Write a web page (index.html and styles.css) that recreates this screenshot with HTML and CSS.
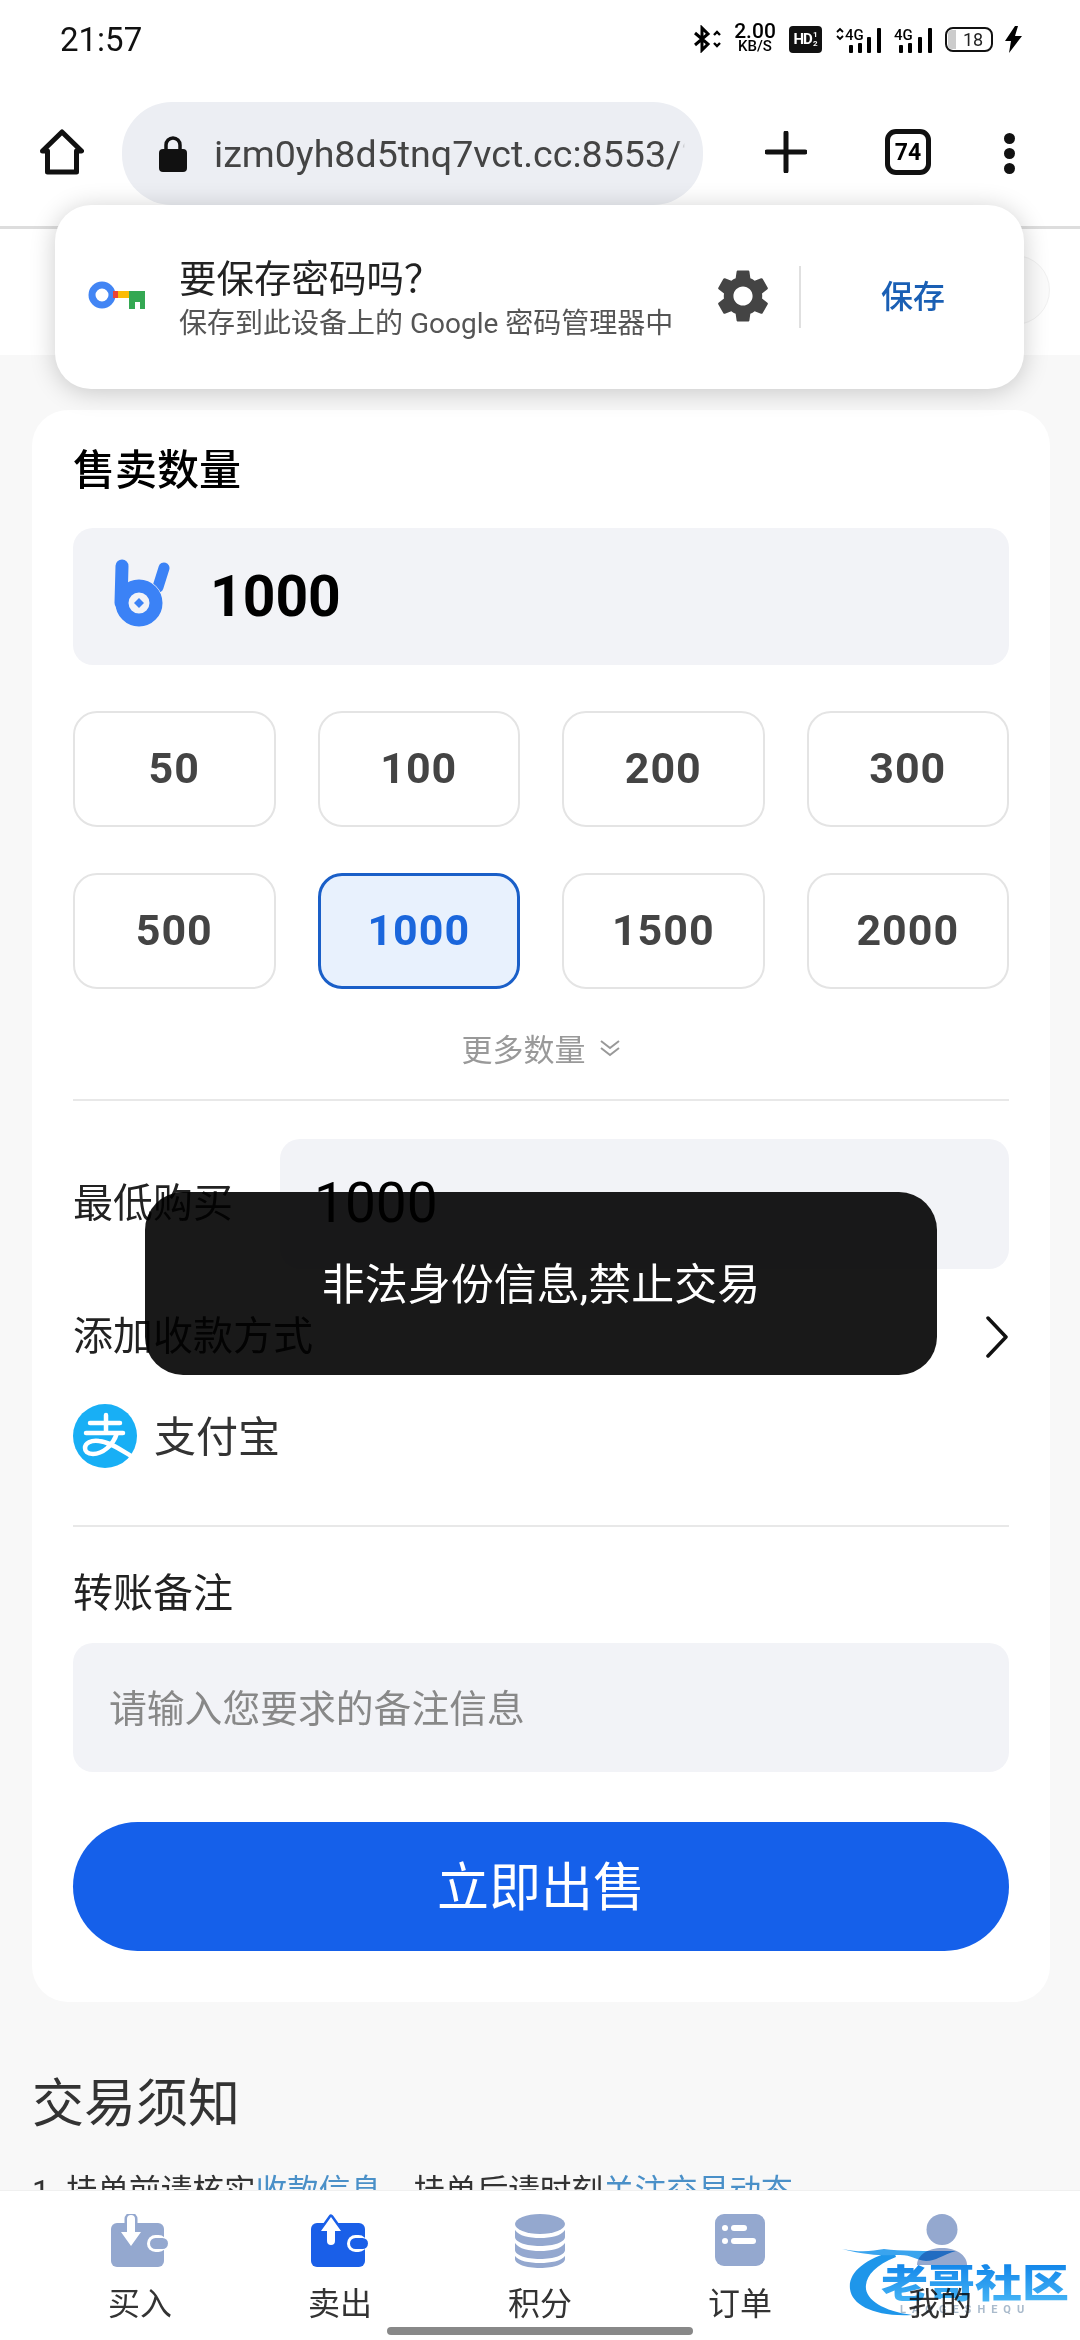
FILE: index.html
```html
<!DOCTYPE html>
<html lang="zh-CN">
<head>
    <meta charset="UTF-8">
    <meta name="viewport" content="width=device-width, initial-scale=1.0">
    <title>出售</title>
    <link rel="stylesheet" href="styles.css">
</head>
<body>

<!-- Status bar -->
<div class="status-bar">
    <span class="status-time">21:57</span>
    <div class="status-icons">
        <svg width="28" height="28" viewBox="0 0 28 28"><path d="M2 8l13 11-6 6V3l6 6L2 20" fill="none" stroke="#000" stroke-width="3"/><path d="M21 10l3-3 3 3M21 18l3 3 3-3" fill="none" stroke="#000" stroke-width="2.4"/></svg>
        <div class="net-speed"><b>2.00</b><span>KB/S</span></div>
        <div class="hd-badge"><b>HD</b><i>1<br>2</i></div>
        <svg width="47" height="27" viewBox="0 0 47 27"><path d="M3 6l3-3 3 3M3 10l3 3 3-3" fill="none" stroke="#000" stroke-width="1.8"/><text x="11" y="14" class="sig-text">4G</text><rect x="15" y="19" width="4" height="8" rx="1"/><rect x="24" y="17" width="4" height="10" rx="1"/><rect x="33" y="11" width="4" height="16" rx="1"/><rect x="43" y="2" width="4" height="25" rx="1"/></svg>
        <svg width="40" height="27" viewBox="0 0 40 27"><text x="1" y="14" class="sig-text">4G</text><rect x="6" y="19" width="4" height="8" rx="1"/><rect x="15" y="17" width="4" height="10" rx="1"/><rect x="25" y="11" width="4" height="16" rx="1"/><rect x="35" y="2" width="4" height="25" rx="1"/></svg>
        <div class="battery"><span class="battery-fill"></span><span class="battery-num">18</span></div>
        <svg width="17" height="27" viewBox="0 0 17 27"><path d="M10 0L0 15h6l-2 12L17 10h-7l3-10z"/></svg>
    </div>
</div>

<!-- Browser toolbar -->
<div class="toolbar">
    <svg class="home-icon" width="44" height="46" viewBox="0 0 44 46"><path d="M2.5 22L22 3l19.500 19H36.500V43H7.500V22z" fill="none" stroke="#111" stroke-width="5" stroke-linejoin="round"/></svg>
    <div class="url-pill">
        <svg width="28" height="36" viewBox="0 0 28 36"><path d="M7 14V9a7 7 0 0 1 14 0v5" fill="none" stroke="#111" stroke-width="3.500"/><rect x="0" y="13" width="28" height="23" rx="4" fill="#111"/></svg>
        <span class="url-text">izm0yh8d5tnq7vct.cc:8553/?</span>
    </div>
    <svg class="plus-icon" width="42" height="42" viewBox="0 0 42 42"><path d="M21 2v38M2 21h38" stroke="#111" stroke-width="5" stroke-linecap="round"/></svg>
    <div class="tab-count">74</div>
    <div class="more-dots"><span></span><span></span><span></span></div>
</div>

<!-- Save password popup -->
<div class="save-popup">
    <svg class="key-icon" width="58" height="28" viewBox="0 0 58 28"><circle cx="14" cy="14" r="10" fill="none" stroke="#4285f4" stroke-width="7"/><rect x="25" y="10" width="5" height="7" fill="#ea4335"/><rect x="30" y="10" width="11" height="7" fill="#fbbc05"/><path d="M41 10h16v18h-5v-7h-5v7h-6z" fill="#34a853"/></svg>
    <div class="popup-text">
        <div class="popup-title">要保存密码吗？</div>
        <div class="popup-sub">保存到此设备上的 Google 密码管理器中</div>
    </div>
    <svg class="gear-icon" width="64" height="64" viewBox="0 0 24 24"><path fill="#444" d="M19.140 12.940c.04-.3.06-.61.06-.94 0-.32-.02-.64-.07-.94l2.030-1.580c.18-.14.23-.41.12-.61l-1.920-3.320c-.12-.22-.37-.29-.59-.22l-2.390.96c-.5-.38-1.030-.7-1.620-.94l-.36-2.540c-.04-.24-.24-.41-.48-.41h-3.840c-.24 0-.43.17-.47.41l-.36 2.540c-.59.24-1.130.57-1.620.94l-2.390-.96c-.22-.08-.47 0-.59.22L2.740 8.870c-.12.21-.08.47.12.61l2.030 1.580c-.05.3-.09.63-.09.94s.02.64.07.94l-2.030 1.580c-.18.14-.23.41-.12.61l1.920 3.320c.12.22.37.29.59.22l2.390-.96c.5.38 1.030.7 1.620.94l.36 2.540c.05.24.24.41.48.41h3.840c.24 0 .44-.17.47-.41l.36-2.540c.59-.24 1.130-.56 1.620-.94l2.390.96c.22.08.47 0 .59-.22l1.920-3.320c.12-.22.07-.47-.12-.61l-2.010-1.580zM12 15.600c-1.980 0-3.600-1.620-3.600-3.600s1.620-3.600 3.600-3.600 3.600 1.620 3.600 3.600-1.620 3.600-3.600 3.600z"/></svg>
    <div class="popup-divider"></div>
    <div class="popup-save">保存</div>
</div>

<!-- Page -->
<div class="main">
    <div class="top-strip"><div class="top-pill"></div></div>

    <div class="page">
        <div class="card">
            <div class="card-title">售卖数量</div>
            <div class="amount-input">
                <svg class="coin-logo" width="56" height="68" viewBox="0 0 56 68"><path d="M50 9L44 28" stroke="#3b82f6" stroke-width="11" stroke-linecap="round"/><circle cx="25" cy="44" r="24" fill="#f2f3f7"/><path d="M8 7L7 44" stroke="#3b82f6" stroke-width="13" stroke-linecap="round"/><circle cx="25" cy="44" r="17" fill="none" stroke="#3b82f6" stroke-width="13"/><path d="M25 39l5 5-5 5-5-5z" fill="#3b82f6"/></svg>
                <span class="amount-value">1000</span>
            </div>

            <div class="amount-grid">
                <div class="amount-btn">50</div>
                <div class="amount-btn">100</div>
                <div class="amount-btn">200</div>
                <div class="amount-btn">300</div>
                <div class="amount-btn">500</div>
                <div class="amount-btn active">1000</div>
                <div class="amount-btn">1500</div>
                <div class="amount-btn">2000</div>
            </div>

            <div class="more-row">
                <span>更多数量</span>
                <svg width="22" height="18" viewBox="0 0 22 18"><path d="M2 2l9 7 9-7M2 9l9 7 9-7" fill="none" stroke="#999" stroke-width="2"/></svg>
            </div>
            <div class="line"></div>

            <div class="min-row">
                <span class="field-label">最低购买</span>
                <div class="min-input">1000</div>
            </div>

            <div class="pay-row">
                <span class="field-label">添加收款方式</span>
                <svg width="24" height="42" viewBox="0 0 24 42"><path d="M3 2l18 19L3 40" fill="none" stroke="#111" stroke-width="3.500" stroke-linecap="round" stroke-linejoin="round"/></svg>
            </div>

            <div class="alipay-row">
                <svg width="64" height="64" viewBox="0 0 64 64"><circle cx="32" cy="32" r="32" fill="#18aff5"/><path d="M17 19h30M33 11v17M13 29h37M44 29c-4 13-15 21-24 21-6 0-8-3-8-6 0-5 6-8 14-7 11 1 22 9 32 15" fill="none" stroke="#fff" stroke-width="4.500" stroke-linecap="round"/></svg>
                <span class="alipay-name">支付宝</span>
            </div>
            <div class="line line-pay"></div>

            <div class="field-label remark-label">转账备注</div>
            <div class="remark-input">请输入您要求的备注信息</div>
            <div class="submit-btn">立即出售</div>
        </div>

        <div class="notice-title">交易须知</div>
        <div class="notice-line">1. 挂单前请核实<a>收款信息</a>，挂单后请时刻<a>关注交易动态</a></div>
    </div>
</div>

<!-- Bottom nav -->
<div class="bottom-nav">
    <div class="nav-item">
        <svg width="58" height="54" viewBox="0 0 58 54"><rect x="0" y="9" width="53" height="44" rx="6" fill="#94a8cf"/><path d="M16 18V5a4 4 0 0 1 8 0v13h6L20 32 10 18z" fill="#fff" stroke="#94a8cf" stroke-width="5" stroke-linejoin="round"/><path d="M16 18V5a4 4 0 0 1 8 0v13h6L20 32 10 18z" fill="#fff"/><rect x="36" y="21" width="20" height="17" rx="8.500" fill="#fff"/><rect x="39" y="24" width="18" height="11" rx="5.500" fill="#94a8cf"/></svg>
        <span>买入</span>
    </div>
    <div class="nav-item">
        <svg width="58" height="54" viewBox="0 0 58 54"><rect x="0" y="9" width="54" height="44" rx="6" fill="#1a5fe8"/><path d="M10 17L20 3l10 14h-6v10a4 4 0 0 1-8 0V17z" fill="#fff" stroke="#1a5fe8" stroke-width="5" stroke-linejoin="round"/><path d="M10 17L20 3l10 14h-6v10a4 4 0 0 1-8 0V17z" fill="#fff"/><rect x="36" y="21" width="20" height="17" rx="8.500" fill="#fff"/><rect x="39" y="24" width="18" height="11" rx="5.500" fill="#1a5fe8"/></svg>
        <span>卖出</span>
    </div>
    <div class="nav-item">
        <svg width="50" height="54" viewBox="0 0 50 54"><ellipse cx="25" cy="10" rx="25" ry="10" fill="#94a8cf"/><path d="M0 16c4 6 14 8 25 8s21-2 25-8v7c0 5-11 9-25 9S0 28 0 23z" fill="#94a8cf"/><path d="M0 29c4 6 14 8 25 8s21-2 25-8v7c0 5-11 9-25 9S0 41 0 36z" fill="#94a8cf"/><path d="M0 42c4 5 14 7 25 7s21-2 25-7v3c0 5-11 9-25 9S0 50 0 45z" fill="#94a8cf"/></svg>
        <span>积分</span>
    </div>
    <div class="nav-item">
        <svg width="50" height="54" viewBox="0 0 50 54"><rect width="50" height="52" rx="9" fill="#94a8cf"/><circle cx="10" cy="14" r="3" fill="#fff"/><rect x="16" y="11" width="16" height="6" rx="3" fill="#fff"/><circle cx="10" cy="27" r="3" fill="#fff"/><rect x="16" y="24" width="25" height="6" rx="3" fill="#fff"/></svg>
        <span>订单</span>
    </div>
    <div class="nav-item">
        <svg class="user-icon" width="50" height="54" viewBox="0 0 50 54"><circle cx="25" cy="15.500" r="15.500" fill="#94a8cf"/><path d="M0 51c0-10 11-17 25-17s25 7 25 17z" fill="#94a8cf"/></svg>
        <span>我的</span>
    </div>

    <!-- watermark laid over the nav -->
    <div class="watermark">
        <svg width="120" height="80" viewBox="0 0 120 80"><path d="M52 8C22 16 6 30 8 46c2 16 24 28 62 26C40 68 22 56 24 42c1-10 10-20 30-28z" fill="#1e96ea"/><path d="M0 6c20 4 30 2 42 0 16 2 40 2 72 2-14 4-20 10-30 10-10-1-14-6-26-6-10 0-28 2-58-6z" fill="#3aa4ee"/></svg>
        <div class="watermark-name">老哥社区</div>
        <div class="watermark-sub">LAOGESHEQU</div>
    </div>

    <div class="home-bar"></div>
</div>

<!-- Toast -->
<div class="toast">非法身份信息,禁止交易</div>

</body>
</html>
```

FILE: styles.css
```css
* {
    box-sizing: border-box;
}

body {
    font-family: Roboto, "Noto Sans CJK SC", sans-serif;
    background-color: #fff;
    color: #000;
    margin: 0;
    width: 1080px;
    height: 2340px;
    overflow: hidden;
    display: flex;
    flex-direction: column;
    position: relative;
}

/* Status bar */
.status-bar {
    height: 78px;
    flex: none;
    padding: 0 58px 0 60px;
    display: flex;
    align-items: center;
    justify-content: space-between;
}

.status-time {
    font-size: 33px;
    color: #111;
}

.status-icons {
    display: flex;
    align-items: center;
    gap: 12px;
}

.net-speed {
    display: flex;
    flex-direction: column;
    align-items: center;
    width: 44px;
    line-height: 15px;
}

.net-speed b {
    font-size: 21px;
    font-weight: 500;
}

.net-speed span {
    font-size: 15px;
    font-weight: 500;
}

.hd-badge {
    width: 33px;
    height: 27px;
    background-color: #111;
    border-radius: 4px;
    color: #fff;
    display: flex;
    align-items: center;
    justify-content: center;
    gap: 1px;
}

.hd-badge b {
    font-size: 15px;
    letter-spacing: -1px;
}

.hd-badge i {
    font-size: 8px;
    line-height: 9px;
    font-style: normal;
    font-weight: bold;
}

.sig-text {
    font-size: 15px;
    font-weight: 500;
    font-family: Roboto, sans-serif;
}

.battery {
    width: 48px;
    height: 25px;
    border: 2.500px solid #111;
    border-radius: 8px;
    position: relative;
    display: flex;
    align-items: center;
    justify-content: center;
    padding-left: 8px;
}

.battery-fill {
    position: absolute;
    left: 1px;
    top: 1px;
    bottom: 1px;
    width: 8px;
    background-color: #ccc;
    border-radius: 4px 0 0 4px;
}

.battery-num {
    font-size: 18px;
    color: #222;
}

/* Toolbar */
.toolbar {
    height: 151px;
    flex: none;
    padding: 0 0 0 40px;
    border-bottom: 3px solid #ddd;
    display: flex;
    align-items: center;
}

.home-icon,
.plus-icon {
    flex: none;
}

.url-pill {
    width: 581px;
    height: 103px;
    margin-left: 38px;
    margin-top: 3px;
    padding: 0 18px 0 37px;
    background-color: #eceef3;
    border-radius: 50px;
    display: flex;
    align-items: center;
    gap: 27px;
    flex: none;
}

.url-pill svg {
    flex: none;
}

.url-text {
    font-size: 37.600px;
    color: #444;
    white-space: nowrap;
    overflow: hidden;
    -webkit-mask-image: linear-gradient(to right, #000 calc(100% - 8px), transparent);
    mask-image: linear-gradient(to right, #000 calc(100% - 8px), transparent);
}

.plus-icon {
    margin-left: 62px;
}

.tab-count {
    width: 46px;
    height: 46px;
    margin-left: 78px;
    border: 5px solid #111;
    border-radius: 11px;
    font-size: 23px;
    font-weight: bold;
    display: flex;
    align-items: center;
    justify-content: center;
    flex: none;
}

.more-dots {
    margin-left: 73px;
    margin-top: 3px;
    display: flex;
    flex-direction: column;
    gap: 4px;
}

.more-dots span {
    width: 11px;
    height: 11px;
    border-radius: 50%;
    background-color: #111;
}

/* Password popup */
.save-popup {
    position: absolute;
    left: 55px;
    top: 205px;
    width: 969px;
    height: 184px;
    background-color: #fff;
    border-radius: 36px;
    box-shadow: 0 3px 26px rgba(0, 0, 0, 0.2);
    display: flex;
    align-items: center;
    padding-left: 33px;
    z-index: 5;
}

.key-icon {
    margin-bottom: 4px;
    flex: none;
}

.popup-text {
    margin-left: 33px;
    margin-top: 4px;
    width: 532px;
    flex: none;
}

.popup-title {
    font-size: 37.500px;
    line-height: 50px;
    color: #222;
}

.popup-sub {
    font-size: 28px;
    line-height: 40px;
    color: #555;
    white-space: nowrap;
}

.gear-icon {
    margin-bottom: 2px;
    flex: none;
}

.popup-divider {
    width: 2px;
    height: 62px;
    margin-left: 24px;
    background-color: #e0e0e0;
}

.popup-save {
    margin-left: 80px;
    margin-bottom: 6px;
    font-size: 32px;
    font-weight: 500;
    color: #1a5fb4;
}

/* Page */
.main {
    flex: 1;
    overflow: hidden;
    background-color: #f8f8f8;
}

.top-strip {
    height: 126px;
    background-color: #fff;
    padding: 26px 30px 0 0;
    display: flex;
    justify-content: flex-end;
}

.top-pill {
    width: 150px;
    height: 70px;
    border: 1px solid #f1f1f1;
    border-radius: 35px;
    background-color: #fbfbfb;
}

.page {
    padding: 55px 30px 0 32px;
}

.card {
    background-color: #fff;
    border-radius: 36px;
    padding: 30px 41px 51px;
}

.card-title {
    font-size: 42px;
    line-height: 60px;
    font-weight: 500;
    padding-top: 1px;
    height: 60px;
}

.amount-input {
    height: 137px;
    margin-top: 28px;
    padding-left: 41px;
    background-color: #f2f3f7;
    border-radius: 20px;
    display: flex;
    align-items: center;
    gap: 40px;
}

.coin-logo {
    margin-bottom: 8px;
}

.amount-value {
    font-size: 57px;
    font-weight: bold;
}

.amount-grid {
    margin-top: 46px;
    display: grid;
    grid-template-columns: repeat(4, 1fr);
    gap: 46px 42px;
}

.amount-btn {
    height: 116px;
    padding-bottom: 2px;
    border: 2px solid #e4e4e4;
    border-radius: 24px;
    font-size: 43px;
    letter-spacing: 1px;
    font-weight: bold;
    color: #444;
    display: flex;
    align-items: center;
    justify-content: center;
}

.amount-btn.active {
    border: 3px solid #1a5fc8;
    background-color: #e8f1fd;
    color: #1a66dc;
}

.more-row {
    margin-top: 39px;
    padding-bottom: 5px;
    height: 44px;
    font-size: 31px;
    color: #999;
    display: flex;
    align-items: center;
    justify-content: center;
    gap: 13px;
}

.line {
    height: 2px;
    margin-top: 27px;
    background-color: #e8e8e8;
}

.field-label {
    font-size: 40px;
    line-height: 56px;
    color: #222;
}

.min-row {
    margin-top: 38px;
    display: flex;
    align-items: center;
    justify-content: space-between;
}

.min-input {
    width: 729px;
    height: 130px;
    padding: 0 0 2px 34px;
    background-color: #f2f3f7;
    border-radius: 20px;
    font-size: 55px;
    display: flex;
    align-items: center;
}

.pay-row {
    margin-top: 40px;
    display: flex;
    align-items: center;
    justify-content: space-between;
}

.alipay-row {
    margin-top: 39px;
    height: 64px;
    display: flex;
    align-items: center;
    gap: 17px;
}

.alipay-name {
    font-size: 42px;
    color: #333;
    padding-bottom: 6px;
}

.line-pay {
    margin-top: 57px;
}

.remark-label {
    margin-top: 39px;
}

.remark-input {
    height: 129px;
    margin-top: 21px;
    padding: 0 0 5px 36px;
    background-color: #f2f3f7;
    border-radius: 20px;
    font-size: 37.800px;
    color: #888;
    display: flex;
    align-items: center;
}

.submit-btn {
    height: 129px;
    margin-top: 50px;
    padding-bottom: 6px;
    background-color: #1560ea;
    border-radius: 65px;
    font-size: 52px;
    color: #fff;
    display: flex;
    align-items: center;
    justify-content: center;
}

.notice-title {
    margin-top: 67px;
    font-size: 52px;
    line-height: 72px;
    color: #333;
}

.notice-line {
    margin-top: 26px;
    font-size: 31.600px;
    line-height: 50px;
    color: #333;
    white-space: nowrap;
}

.notice-line a {
    color: #4a90c8;
}

/* Bottom nav */
.bottom-nav {
    height: 150px;
    flex: none;
    padding: 23px 40px 0;
    background-color: #fff;
    border-top: 1px solid #f0f0f0;
    display: flex;
    position: relative;
}

.nav-item {
    flex: 1;
    display: flex;
    flex-direction: column;
    align-items: center;
    font-size: 32px;
    line-height: 44px;
    color: #333;
}

.nav-item svg {
    height: 54px;
    margin-bottom: 14px;
}

.nav-item .user-icon {
    margin-left: 4px;
}

.watermark {
    position: absolute;
    left: 842px;
    top: 52px;
    width: 230px;
    height: 84px;
    mix-blend-mode: multiply;
}

.watermark svg {
    position: absolute;
    left: 0;
    top: 0;
}

.watermark-name {
    position: absolute;
    left: 39px;
    top: 17px;
    font-size: 47px;
    line-height: 47px;
    font-weight: 900;
    white-space: nowrap;
    transform: scaleY(0.82);
    background: linear-gradient(#1387ea, #45b4f5);
    -webkit-background-clip: text;
    background-clip: text;
    color: transparent;
}

.watermark-sub {
    position: absolute;
    left: 58px;
    top: 60px;
    font-size: 11px;
    letter-spacing: 6px;
    font-weight: bold;
    white-space: nowrap;
    color: #aabbcc;
}

.home-bar {
    position: absolute;
    left: 387px;
    bottom: 5px;
    width: 306px;
    height: 8px;
    border-radius: 4px;
    background-color: #888;
}

/* Toast */
.toast {
    position: absolute;
    left: 145px;
    top: 1192px;
    width: 792px;
    height: 183px;
    padding-bottom: 6px;
    background-color: rgba(0, 0, 0, 0.9);
    border-radius: 38px;
    color: #fff;
    font-size: 43px;
    display: flex;
    align-items: center;
    justify-content: center;
    z-index: 6;
}
```
